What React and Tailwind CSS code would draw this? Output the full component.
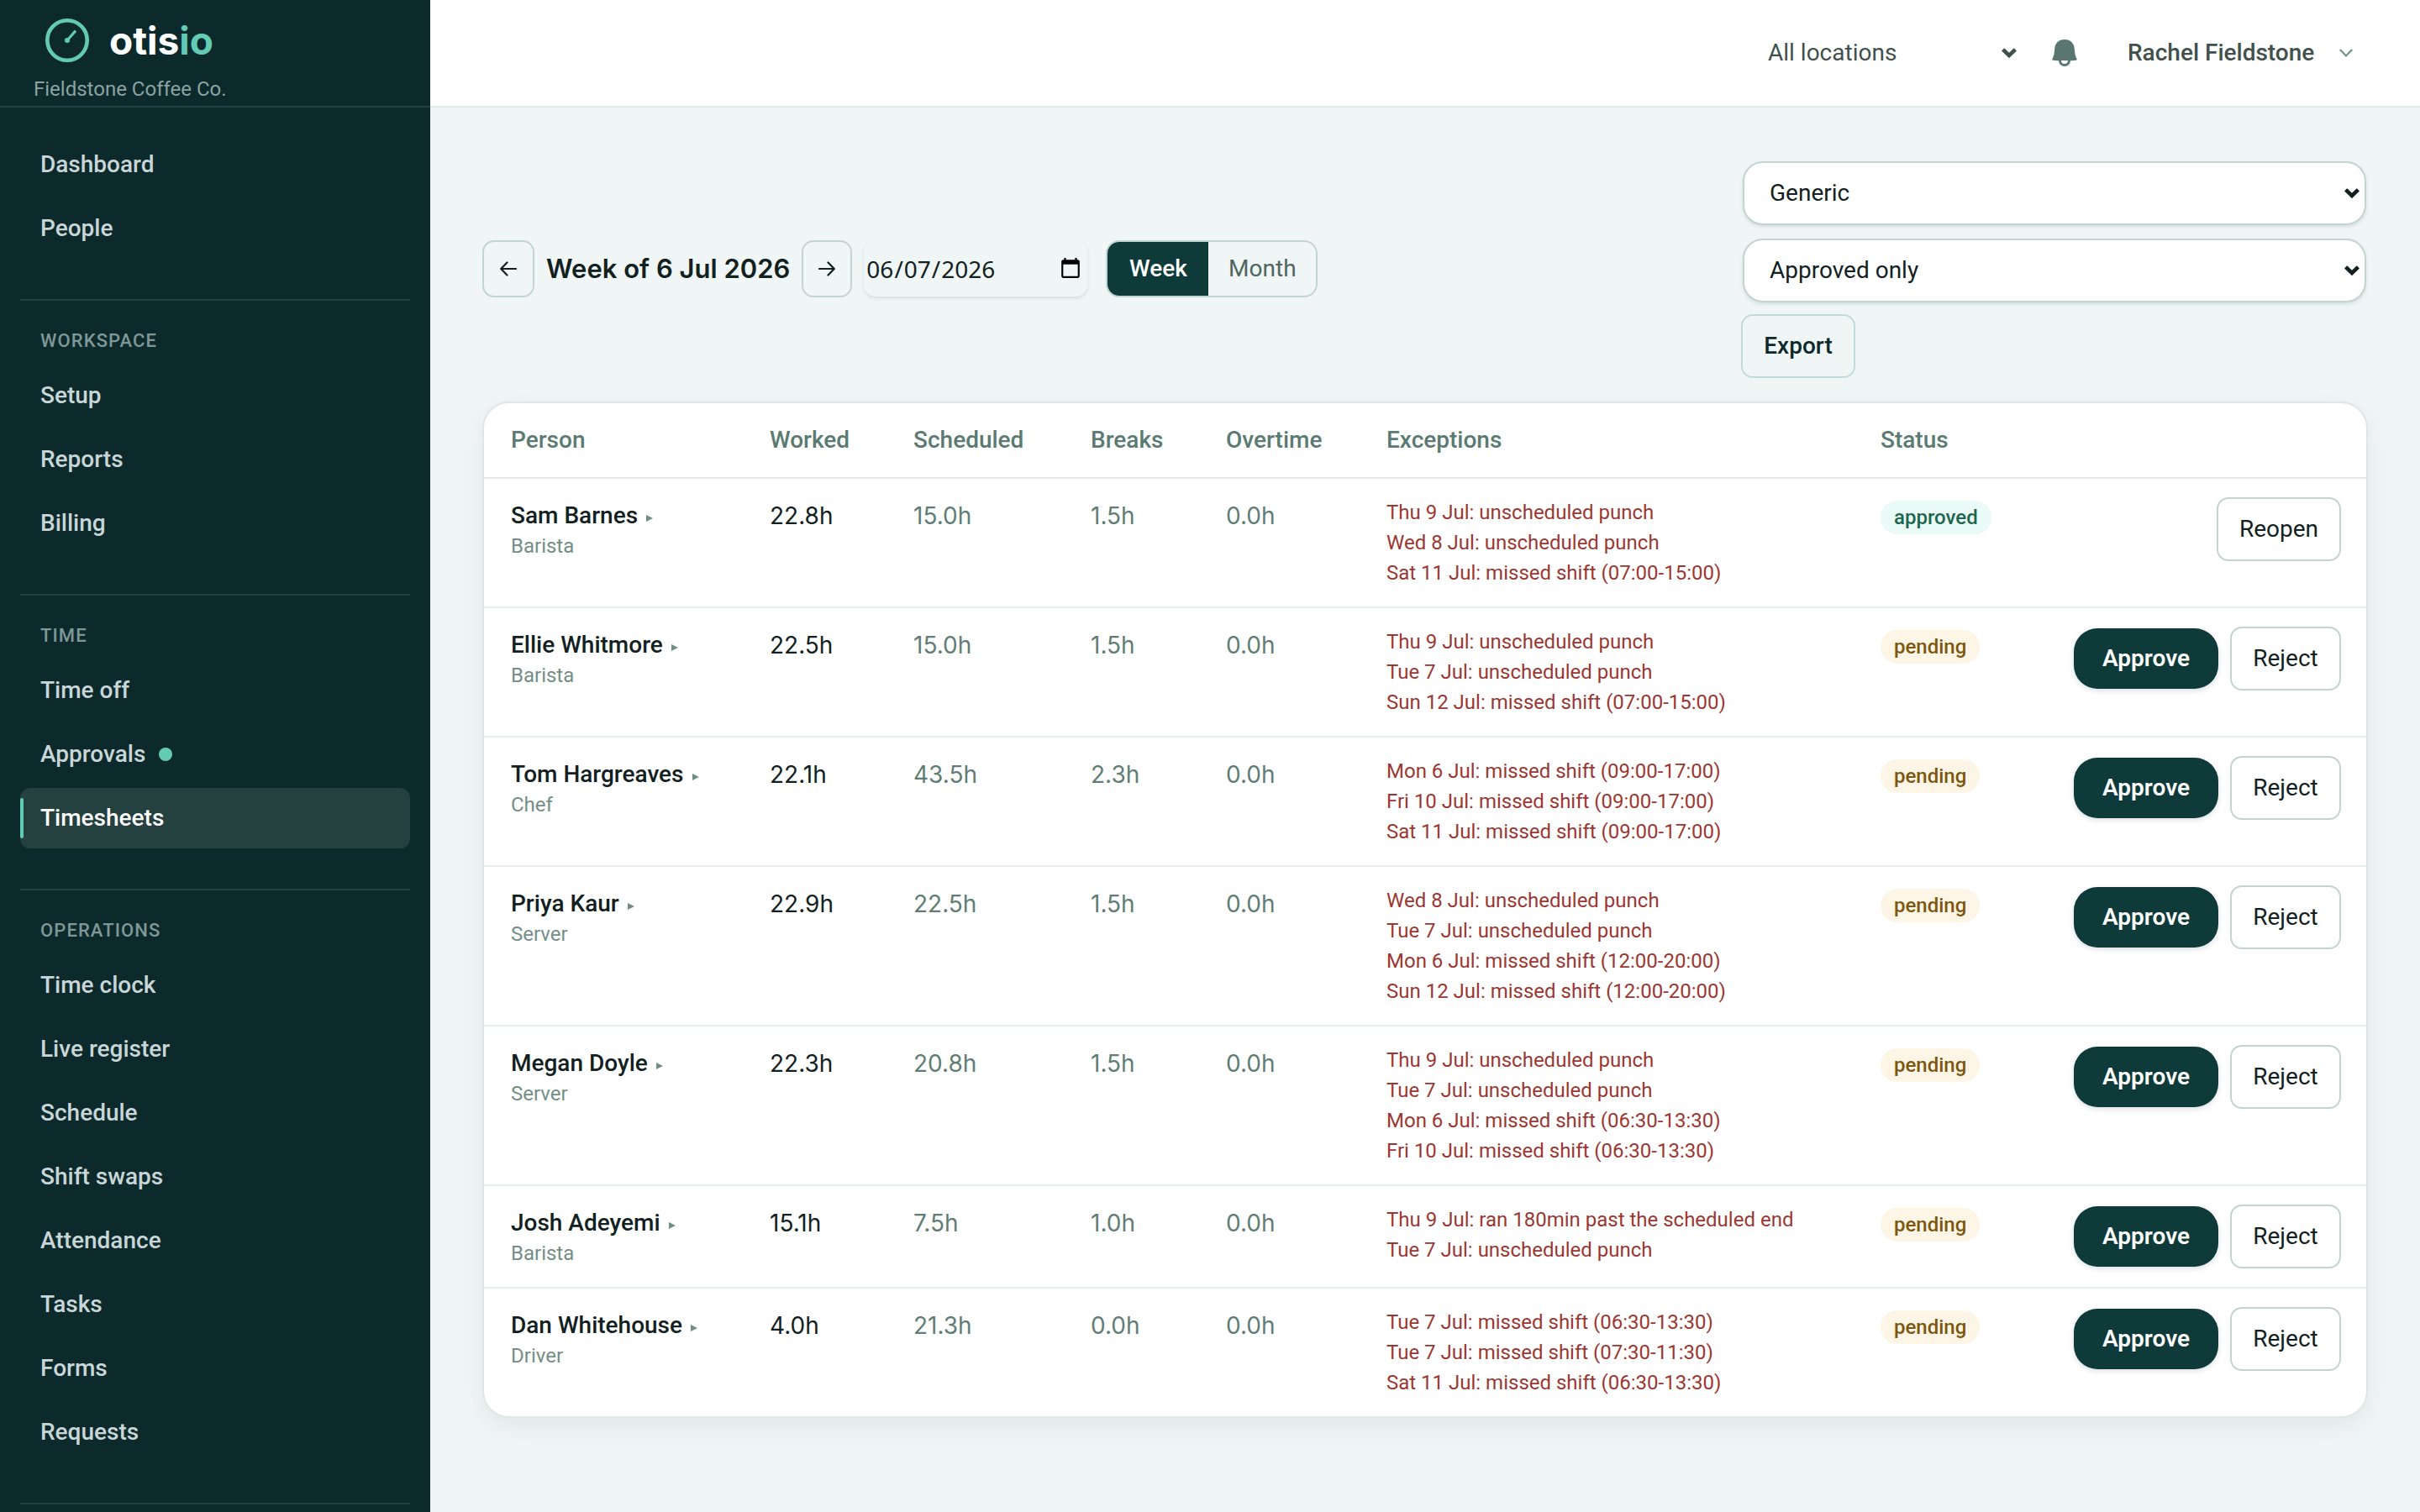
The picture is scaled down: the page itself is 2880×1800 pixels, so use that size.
import React, { useState } from 'react';

const NAV_SECTIONS = [
  { title: null, items: ['Dashboard', 'People'] },
  { title: 'Workspace', items: ['Setup', 'Reports', 'Billing'] },
  { title: 'Time', items: ['Time off', 'Approvals', 'Timesheets'] },
  {
    title: 'Operations',
    items: ['Time clock', 'Live register', 'Schedule', 'Shift swaps', 'Attendance', 'Tasks', 'Forms', 'Requests'],
  },
];

const INITIAL_ROWS = [
  {
    id: 1, name: 'Sam Barnes', role: 'Barista', worked: '22.8h', scheduled: '15.0h', breaks: '1.5h', overtime: '0.0h', status: 'approved',
    exceptions: ['Thu 9 Jul: unscheduled punch', 'Wed 8 Jul: unscheduled punch', 'Sat 11 Jul: missed shift (07:00-15:00)'],
  },
  {
    id: 2, name: 'Ellie Whitmore', role: 'Barista', worked: '22.5h', scheduled: '15.0h', breaks: '1.5h', overtime: '0.0h', status: 'pending',
    exceptions: ['Thu 9 Jul: unscheduled punch', 'Tue 7 Jul: unscheduled punch', 'Sun 12 Jul: missed shift (07:00-15:00)'],
  },
  {
    id: 3, name: 'Tom Hargreaves', role: 'Chef', worked: '22.1h', scheduled: '43.5h', breaks: '2.3h', overtime: '0.0h', status: 'pending',
    exceptions: ['Mon 6 Jul: missed shift (09:00-17:00)', 'Fri 10 Jul: missed shift (09:00-17:00)', 'Sat 11 Jul: missed shift (09:00-17:00)'],
  },
  {
    id: 4, name: 'Priya Kaur', role: 'Server', worked: '22.9h', scheduled: '22.5h', breaks: '1.5h', overtime: '0.0h', status: 'pending',
    exceptions: ['Wed 8 Jul: unscheduled punch', 'Tue 7 Jul: unscheduled punch', 'Mon 6 Jul: missed shift (12:00-20:00)', 'Sun 12 Jul: missed shift (12:00-20:00)'],
  },
  {
    id: 5, name: 'Megan Doyle', role: 'Server', worked: '22.3h', scheduled: '20.8h', breaks: '1.5h', overtime: '0.0h', status: 'pending',
    exceptions: ['Thu 9 Jul: unscheduled punch', 'Tue 7 Jul: unscheduled punch', 'Mon 6 Jul: missed shift (06:30-13:30)', 'Fri 10 Jul: missed shift (06:30-13:30)'],
  },
  {
    id: 6, name: 'Josh Adeyemi', role: 'Barista', worked: '15.1h', scheduled: '7.5h', breaks: '1.0h', overtime: '0.0h', status: 'pending',
    exceptions: ['Thu 9 Jul: ran 180min past the scheduled end', 'Tue 7 Jul: unscheduled punch'],
  },
  {
    id: 7, name: 'Dan Whitehouse', role: 'Driver', worked: '4.0h', scheduled: '21.3h', breaks: '0.0h', overtime: '0.0h', status: 'pending',
    exceptions: ['Tue 7 Jul: missed shift (06:30-13:30)', 'Tue 7 Jul: missed shift (07:30-11:30)', 'Sat 11 Jul: missed shift (06:30-13:30)'],
  },
];

const SelectChevron = ({ className }) => (
  <svg viewBox="0 0 18 12" className={`pointer-events-none col-start-1 row-start-1 h-3 w-[18px] self-center justify-self-end ${className}`} fill="none" stroke="currentColor" strokeWidth="4.6" aria-hidden="true">
    <path d="M1.6 1.8 9 9 16.4 1.8" />
  </svg>
);

const ArrowIcon = ({ right }) => (
  <svg viewBox="0 0 20 18" className="h-[18px] w-5" fill="none" stroke="currentColor" strokeWidth="2.2" strokeLinecap="round" strokeLinejoin="round" aria-hidden="true">
    {right ? <path d="M1 9h17.5M11.5 1.5 18.8 9l-7.3 7.5" /> : <path d="M19 9H1.5M8.5 1.5 1.2 9l7.3 7.5" />}
  </svg>
);

const Sidebar = () => (
  <aside className="h-screen w-[512px] shrink-0 overflow-hidden bg-[#0c2a2b]">
    <div className="h-32 border-b-2 border-[#214041] pt-[22px]">
      <a href="#home" className="flex h-[52px] items-center gap-6 pl-[54px]">
        <svg viewBox="0 0 52 52" className="size-[52px]" fill="none" stroke="#63cbb3" aria-hidden="true">
          <circle cx="26" cy="26" r="23.7" strokeWidth="4.6" />
          <path d="M26 26 36 14.6" strokeWidth="3.2" />
          <circle cx="26" cy="26" r="3" fill="#63cbb3" stroke="none" />
        </svg>
        <span className="font-['Inter',sans-serif] text-[46px] leading-[52px] font-bold text-white">
          otis<span className="text-[#63cbb3]">io</span>
        </span>
      </a>
      <p className="mt-4 pl-10 text-2xl leading-8 text-[#8ba2a2]">Fieldstone Coffee Co.</p>
    </div>

    <nav className="px-6 pt-8">
      {NAV_SECTIONS.map((section) => (
        <div key={section.items[0]} className={section.title ? 'mt-12 border-t-2 border-[#214041] pt-8' : ''}>
          {section.title && (
            <h2 className="mb-[13px] pl-6 text-[22px] leading-8 font-medium tracking-wider text-[#7f9797] uppercase">{section.title}</h2>
          )}
          <ul className="flex flex-col gap-1">
            {section.items.map((item) => (
              <li key={item}>
                <a
                  href={`#${item}`}
                  className={`relative flex h-[72px] items-center gap-4 rounded-xl pl-6 text-[28px] font-medium ${
                    item === 'Timesheets' ? 'bg-[#24403f] text-white' : 'text-[#c9d6d8]'
                  }`}
                >
                  {item === 'Timesheets' && <span className="absolute top-3 left-0 h-12 w-1 rounded-sm bg-[#63cbb3]" />}
                  {item}
                  {item === 'Approvals' && <span className="size-4 rounded-full bg-[#63cbb3]" />}
                </a>
              </li>
            ))}
          </ul>
        </div>
      ))}
      <div className="mt-12 border-t-2 border-[#214041]" />
    </nav>
  </aside>
);

const TopBar = () => (
  <header className="flex h-32 items-center justify-end border-b-2 border-[#dde9e7] bg-white pr-20 text-[28px] text-[#41504d]">
    <div className="grid w-[296px] items-center">
      <select aria-label="Location" className="col-start-1 row-start-1 appearance-none bg-transparent leading-10">
        <option>All locations</option>
      </select>
      <SelectChevron className="" />
    </div>
    <button type="button" aria-label="Notifications" className="ml-[42px] text-[#5a7670]">
      <svg viewBox="0 0 30 32" className="h-8 w-[30px]" aria-hidden="true">
        <path d="M15 0C8 0 3.6 4.6 3.2 11 2.8 16 2.600 19.500 0 24.200 4 25.200 9 25.600 15 25.600s11-.4 15-1.400C27.400 19.500 27.200 16 26.800 11 26.400 4.600 22 0 15 0Z" fill="currentColor" />
        <path d="M9.500 25a5.500 5.500 0 0 0 11 0" fill="white" stroke="currentColor" strokeWidth="3" />
      </svg>
    </button>
    <button type="button" className="ml-[60px] flex w-[268px] items-center justify-between font-medium">
      Rachel Fieldstone
      <svg viewBox="0 0 16 10" className="h-2.5 w-4 text-[#6f9289]" fill="none" stroke="currentColor" strokeWidth="2.2" aria-hidden="true">
        <path d="M.8 1 8 8.400 15.200 1" />
      </svg>
    </button>
  </header>
);

const ExportSelect = ({ label, options }) => (
  <div className="m-0.5 grid">
    <select
      aria-label={label}
      className="col-start-1 row-start-1 h-[76px] appearance-none rounded-3xl border-2 border-[#c3d5d1] bg-white pl-[30px] text-[28px] text-[#12211f] shadow-[0_2px_4px_rgba(15,40,40,0.12)]"
    >
      {options.map((o) => (
        <option key={o}>{o}</option>
      ))}
    </select>
    <SelectChevron className="mr-2 text-[#12211f]" />
  </div>
);

const Toolbar = () => {
  const [view, setView] = useState('Week');

  return (
    <div className="flex items-center justify-between">
      <div className="flex items-center gap-3.5">
        <button type="button" aria-label="Previous week" className="flex h-[68px] w-[62px] items-center justify-center rounded-[14px] border-2 border-[#c3d5d1]">
          <ArrowIcon />
        </button>
        <h1 className="font-['Inter',sans-serif] text-[31px] leading-10 font-semibold">Week of 6 Jul 2026</h1>
        <button type="button" aria-label="Next week" className="flex h-[68px] w-[60px] items-center justify-center rounded-[14px] border-2 border-[#c3d5d1]">
          <ArrowIcon right />
        </button>
        <input
          type="date"
          aria-label="Jump to date"
          defaultValue="2026-06-07"
          className="h-[66px] w-[266px] rounded-[14px] pr-1 pl-0.5 font-['Noto_Sans',sans-serif] text-[28px] shadow-[0_2px_4px_rgba(15,40,40,0.12)]"
        />
        <div className="ml-2 flex h-[68px] overflow-hidden rounded-2xl border-2 border-[#c3d5d1] text-[28px]">
          <button
            type="button"
            onClick={() => setView('Week')}
            className={`w-[120px] ${view === 'Week' ? 'bg-[#0e3a3a] font-medium text-white' : 'text-[#4f6660]'}`}
          >
            Week
          </button>
          <button
            type="button"
            onClick={() => setView('Month')}
            className={`w-32 ${view === 'Month' ? 'bg-[#0e3a3a] font-medium text-white' : 'text-[#4f6660]'}`}
          >
            Month
          </button>
        </div>
      </div>

      <div className="flex w-[746px] flex-col gap-3">
        <ExportSelect label="Export format" options={['Generic']} />
        <ExportSelect label="Export scope" options={['Approved only']} />
        <button type="button" className="h-[76px] w-[136px] rounded-[14px] border-2 border-[#bfdcda] text-[28px] font-medium text-[#0c2a2b]">
          Export
        </button>
      </div>
    </div>
  );
};

const StatusPill = ({ status }) => (
  <span
    className={`inline-block h-10 rounded-full px-4 text-2xl leading-10 font-medium ${
      status === 'approved' ? 'bg-[#eafaf6] text-[#1c6650]' : 'bg-[#fdf6e6] text-[#7d5610]'
    }`}
  >
    {status}
  </span>
);

const TimesheetRow = ({ row, onStatus }) => (
  <tr className="align-top [&>td]:border-b-2 [&>td]:border-[#e7edeb] [&>td]:px-8 [&>td]:py-[22px] last:[&>td]:border-b-0">
    <td>
      <button type="button" className="flex items-center gap-2.5 text-[28px] leading-11 font-medium whitespace-nowrap">
        {row.name}
        <svg viewBox="0 0 8 8" className="mt-1.5 size-2 text-[#6f8f86]" fill="currentColor" aria-hidden="true">
          <path d="M0 0 8 4 0 8Z" />
        </svg>
      </button>
      <p className="-mt-1 text-2xl leading-9 text-[#748e87]">{row.role}</p>
    </td>
    <td className="font-['Inter',sans-serif] text-[28px] leading-11">{row.worked}</td>
    <td className="font-['Inter',sans-serif] text-[28px] leading-11 text-[#5f7d75]">{row.scheduled}</td>
    <td className="font-['Inter',sans-serif] text-[28px] leading-11 text-[#5f7d75]">{row.breaks}</td>
    <td className="font-['Inter',sans-serif] text-[28px] leading-11 text-[#5f7d75]">{row.overtime}</td>
    <td className="text-2xl leading-9 whitespace-nowrap text-[#9b3732]">
      {row.exceptions.map((e) => (
        <p key={e}>{e}</p>
      ))}
    </td>
    <td>
      <div className="flex pt-1">
        <StatusPill status={row.status} />
      </div>
    </td>
    <td>
      <div className="-mr-0.5 flex items-center justify-end gap-3.5 text-[28px]">
        {row.status === 'approved' ? (
          <button type="button" onClick={() => onStatus(row.id, 'pending')} className="h-[76px] w-[148px] rounded-[14px] border-2 border-[#c3d5d1]">
            Reopen
          </button>
        ) : (
          <>
            <button
              type="button"
              onClick={() => onStatus(row.id, 'approved')}
              className="h-[72px] w-[172px] rounded-[28px] bg-[#0e3a3a] font-semibold text-white shadow-[0_2px_6px_rgba(15,40,60,0.16)]"
            >
              Approve
            </button>
            <button type="button" onClick={() => onStatus(row.id, 'rejected')} className="h-[76px] w-[132px] rounded-[14px] border-2 border-[#c3d5d1]">
              Reject
            </button>
          </>
        )}
      </div>
    </td>
  </tr>
);

const App = () => {
  const [rows, setRows] = useState(INITIAL_ROWS);

  const handleStatus = (id, status) => {
    setRows(rows.map((r) => (r.id === id ? { ...r, status } : r)));
  };

  return (
    <div className="flex min-h-screen bg-[#f0f6f6] font-['Roboto','IBM_Plex_Sans',sans-serif] text-[#12211f]">
      <Sidebar />
      <div className="min-w-0 flex-1">
        <TopBar />
        <main className="p-[62px]">
          <Toolbar />
          <div className="mt-7 overflow-hidden rounded-[32px] border-2 border-[#dfe7e5] bg-white shadow-[0_10px_28px_rgba(15,50,45,0.07)]">
            <table className="w-full table-fixed border-separate border-spacing-0">
              <colgroup>
                <col className="w-[308px]" />
                <col className="w-[171px]" />
                <col className="w-[211px]" />
                <col className="w-[161px]" />
                <col className="w-[191px]" />
                <col className="w-[588px]" />
                <col className="w-[200px]" />
                <col />
              </colgroup>
              <thead>
                <tr className="text-left text-[28px] leading-10 text-[#5a7a72] [&>th]:border-b-2 [&>th]:border-[#dce9e6] [&>th]:px-8 [&>th]:py-6 [&>th]:font-medium">
                  <th>Person</th>
                  <th>Worked</th>
                  <th>Scheduled</th>
                  <th>Breaks</th>
                  <th>Overtime</th>
                  <th>Exceptions</th>
                  <th>Status</th>
                  <th aria-label="Actions" />
                </tr>
              </thead>
              <tbody>
                {rows.map((row) => (
                  <TimesheetRow key={row.id} row={row} onStatus={handleStatus} />
                ))}
              </tbody>
            </table>
          </div>
        </main>
      </div>
    </div>
  );
};

export default App;
